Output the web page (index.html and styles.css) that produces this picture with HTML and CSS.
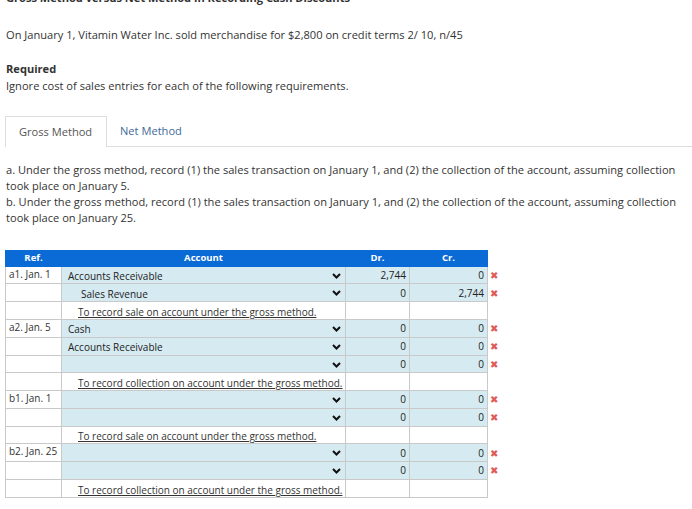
FILE: index.html
```html
<!DOCTYPE html>
<html>
<head>
<meta charset="utf-8">
<link rel="stylesheet" href="styles.css">
</head>
<body>
<div class="page">
  <h1 class="title">Gross Method versus Net Method in Recording Cash Discounts</h1>
  <p class="intro">On January 1, Vitamin Water Inc. sold merchandise for $2,800 on credit terms 2/ 10, n/45</p>
  <div class="req">
    <div class="req-h">Required</div>
    <div class="req-t">Ignore cost of sales entries for each of the following requirements.</div>
  </div>
  <div class="tabs">
    <div class="tab active">Gross Method</div>
    <div class="tab">Net Method</div>
  </div>
  <div class="instr">
    <div>a. Under the gross method, record (1) the sales transaction on January 1, and (2) the collection of the account, assuming collection took place on January 5.</div>
    <div>b. Under the gross method, record (1) the sales transaction on January 1, and (2) the collection of the account, assuming collection took place on January 25.</div>
  </div>
  <table class="jt">
    <colgroup><col class="c-ref"><col class="c-acc"><col class="c-dr"><col class="c-cr"><col class="c-x"></colgroup>
    <thead>
      <tr><th>Ref.</th><th>Account</th><th>Dr.</th><th>Cr.</th><th class="x"></th></tr>
    </thead>
    <tbody>
      <tr><td class="ref">a1. Jan. 1</td><td class="acc">Accounts Receivable<svg class="chev" viewBox="0 0 9 6"><polyline points="1,1 4.5,4.5 8,1"/></svg></td><td class="num">2,744</td><td class="num">0</td><td class="x">✖</td></tr>
      <tr><td class="ref"></td><td class="acc ind">Sales Revenue<svg class="chev" viewBox="0 0 9 6"><polyline points="1,1 4.5,4.5 8,1"/></svg></td><td class="num">0</td><td class="num">2,744</td><td class="x">✖</td></tr>
      <tr class="memo"><td class="ref"></td><td class="note"><span>To record sale on account under the gross method.</span></td><td></td><td></td><td class="x"></td></tr>

      <tr><td class="ref">a2. Jan. 5</td><td class="acc">Cash<svg class="chev" viewBox="0 0 9 6"><polyline points="1,1 4.5,4.5 8,1"/></svg></td><td class="num">0</td><td class="num">0</td><td class="x">✖</td></tr>
      <tr><td class="ref"></td><td class="acc">Accounts Receivable<svg class="chev" viewBox="0 0 9 6"><polyline points="1,1 4.5,4.5 8,1"/></svg></td><td class="num">0</td><td class="num">0</td><td class="x">✖</td></tr>
      <tr><td class="ref"></td><td class="acc"><svg class="chev" viewBox="0 0 9 6"><polyline points="1,1 4.5,4.5 8,1"/></svg></td><td class="num">0</td><td class="num">0</td><td class="x">✖</td></tr>
      <tr class="memo"><td class="ref"></td><td class="note"><span>To record collection on account under the gross method.</span></td><td></td><td></td><td class="x"></td></tr>

      <tr><td class="ref">b1. Jan. 1</td><td class="acc"><svg class="chev" viewBox="0 0 9 6"><polyline points="1,1 4.5,4.5 8,1"/></svg></td><td class="num">0</td><td class="num">0</td><td class="x">✖</td></tr>
      <tr><td class="ref"></td><td class="acc"><svg class="chev" viewBox="0 0 9 6"><polyline points="1,1 4.5,4.5 8,1"/></svg></td><td class="num">0</td><td class="num">0</td><td class="x">✖</td></tr>
      <tr class="memo"><td class="ref"></td><td class="note"><span>To record sale on account under the gross method.</span></td><td></td><td></td><td class="x"></td></tr>

      <tr><td class="ref">b2. Jan. 25</td><td class="acc"><svg class="chev" viewBox="0 0 9 6"><polyline points="1,1 4.5,4.5 8,1"/></svg></td><td class="num">0</td><td class="num">0</td><td class="x">✖</td></tr>
      <tr><td class="ref"></td><td class="acc"><svg class="chev" viewBox="0 0 9 6"><polyline points="1,1 4.5,4.5 8,1"/></svg></td><td class="num">0</td><td class="num">0</td><td class="x">✖</td></tr>
      <tr class="memo"><td class="ref"></td><td class="note"><span>To record collection on account under the gross method.</span></td><td></td><td></td><td class="x"></td></tr>
    </tbody>
  </table>
</div>
</body>
</html>
```
FILE: styles.css
```css
html, body {
  margin: 0;
  padding: 0;
  background: #fff;
}
body {
  font-family: "Open Sans", "DejaVu Sans", sans-serif;
  color: #333;
  font-size: 11.1px;
  overflow: hidden;
}
.page {
  padding: 0 0 0 6px;
}
.title {
  font-size: 11.1px;
  font-weight: 700;
  margin: -10px 0 0 0;
  line-height: 16px;
  color: #333;
}
.intro {
  margin: 21px 0 0 0;
  line-height: 16px;
}
.req {
  margin-top: 16.5px;
  line-height: 17px;
}
.req-h {
  font-weight: 700;
}
.tabs {
  display: flex;
  margin: 22.5px 0 0 -1px;
  border-bottom: 1px solid #ddd;
  height: 30px;
}
.tab {
  padding: 0 13px;
  line-height: 30px;
  color: #3e6a98;
}
.tab.active {
  color: #555;
  border: 1px solid #ddd;
  border-bottom: none;
  background: #fff;
  width: 74px;
  margin-bottom: -1px;
  height: 30px;
}
.instr {
  margin-top: 15px;
  line-height: 16px;
  padding-right: 8px;
}
.jt {
  margin: 24px 0 0 -1px;
  border-collapse: collapse;
  table-layout: fixed;
  font-size: 10px;
}
.c-ref { width: 56px; }
.c-acc { width: 284px; }
.c-dr { width: 64px; }
.c-cr { width: 78px; }
.c-x { width: 14px; }
.jt thead tr {
  height: 15.7px;
}
.jt th {
  background: #0a6ad6;
  color: #fff;
  font-weight: 700;
  padding: 0;
  border: 1px solid #0a6ad6;
  line-height: 12px;
  font-size: 9.5px;
}
.jt th.x, .jt td.x {
  background: #fff;
  border: none;
}
.jt tbody tr {
  height: 17.77px;
}
.jt td {
  border: 1px solid #c9c9c9;
  padding: 0;
  white-space: nowrap;
  line-height: 12px;
  color: #222;
}
.jt td.ref {
  background: #fff;
  padding-left: 3px;
  vertical-align: top;
  padding-top: 1px;
  color: #333;
}
.jt td.acc {
  background: #d6eaf1;
  padding: 2px 6px 0 6px;
  position: relative;
}
.jt td.acc.ind {
  padding-left: 19px;
}
.chev {
  position: absolute;
  right: 4px;
  top: 6px;
  width: 9px;
  height: 6px;
  fill: none;
  stroke: #111;
  stroke-width: 2;
}
.jt td.num {
  background: #d6eaf1;
  text-align: right;
  padding-right: 3px;
}
.jt td.note {
  background: #fff;
  padding-left: 16px;
  padding-top: 3px;
}
.jt td.note span {
  text-decoration: underline;
  color: #333;
}
.jt td.x {
  color: #e05a5a;
  font-size: 10px;
  padding-left: 2px;
}
```
